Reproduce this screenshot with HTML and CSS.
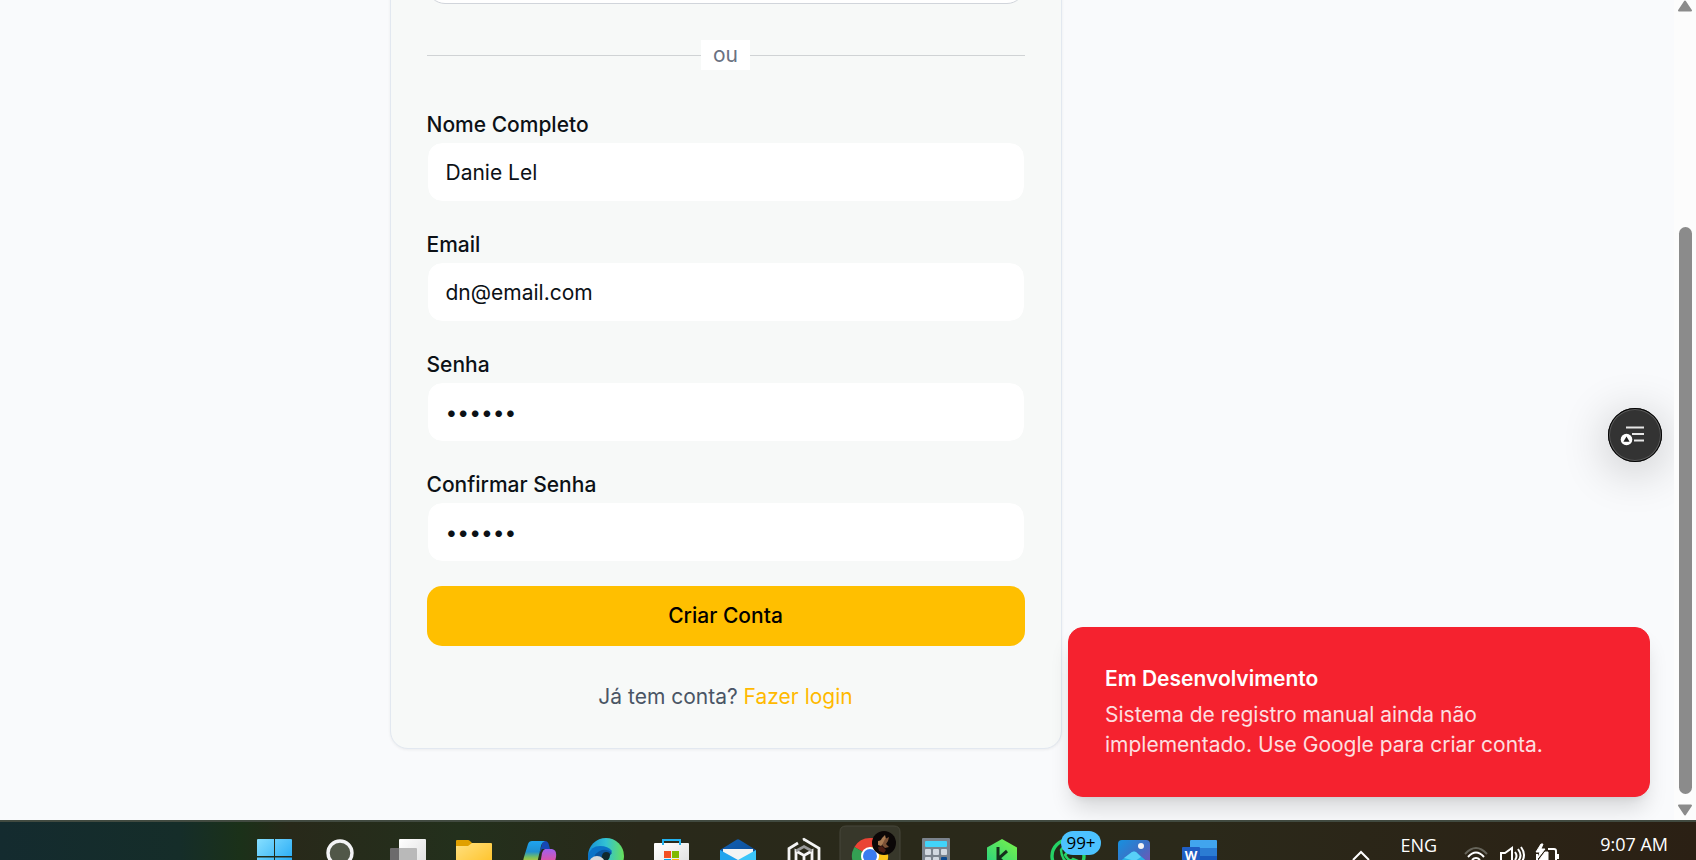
FILE: index.html
```html
<!DOCTYPE html>
<html lang="pt-BR">
<head>
<meta charset="utf-8">
<meta name="viewport" content="width=device-width, initial-scale=1">
<title>Criar Conta</title>
<link rel="stylesheet" href="styles.css">
</head>
<body>
<div class="browser">
  <main class="page">
    <section class="card">
      <button type="button" class="google-button" aria-label="Google"></button>
      <div class="divider"><span class="divider-text">ou</span></div>
      <form class="form">
        <div class="field">
          <label for="name">Nome Completo</label>
          <input id="name" type="text" value="Danie Lel">
        </div>
        <div class="field">
          <label for="email">Email</label>
          <input id="email" type="email" value="dn@email.com">
        </div>
        <div class="field">
          <label for="password">Senha</label>
          <input id="password" type="password" value="123456">
        </div>
        <div class="field">
          <label for="confirm">Confirmar Senha</label>
          <input id="confirm" type="password" value="123456">
        </div>
        <button type="submit" class="submit">Criar Conta</button>
      </form>
      <p class="login">Já tem conta? <a href="#login">Fazer login</a></p>
    </section>
    <button type="button" class="floating" aria-label="Menu">
      <svg viewBox="0 0 54 54" width="54" height="54">
        <path d="M18 19.500h18M24 26h12M26 32.500h10" stroke="#e6e6e6" stroke-width="2" fill="none"/>
        <circle cx="18.500" cy="31.500" r="7" fill="#333"/>
        <circle cx="18.500" cy="31.500" r="5.800" fill="#fff"/>
        <path d="M18.500 28.600l3.100 5.200h-6.200z" fill="#222"/>
      </svg>
    </button>
    <div class="toast" role="alert">
      <strong class="toast-title">Em Desenvolvimento</strong>
      <p class="toast-text">Sistema de registro manual ainda não implementado. Use Google para criar conta.</p>
    </div>
  </main>
  <div class="scrollbar">
    <svg width="16" height="12" viewBox="0 0 16 12"><path d="M8 1.500L14 10.500H2z" fill="#8b8b8b" stroke="#8b8b8b" stroke-width="2" stroke-linejoin="round"/></svg>
    <div class="track"><div class="thumb"></div></div>
    <svg width="16" height="12" viewBox="0 0 16 12"><path d="M8 10.500L14 1.500H2z" fill="#8b8b8b" stroke="#8b8b8b" stroke-width="2" stroke-linejoin="round"/></svg>
  </div>
</div>
<footer class="taskbar">
  <svg width="0" height="0" class="defs">
    <defs>
      <linearGradient id="win" x1="0" y1="0" x2="1" y2="1"><stop offset="0" stop-color="#86dfff"/><stop offset="1" stop-color="#12a0f4"/></linearGradient>
      <linearGradient id="paper" x1="0" y1="0" x2="1" y2="1"><stop offset="0" stop-color="#fff"/><stop offset="1" stop-color="#ddd"/></linearGradient>
      <linearGradient id="folder" x1="0" y1="0" x2="1" y2="1"><stop offset="0" stop-color="#ffe080"/><stop offset="1" stop-color="#ffc020"/></linearGradient>
      <linearGradient id="copA" x1="0" y1="0" x2="0" y2="1"><stop offset="0" stop-color="#1ea4f0"/><stop offset=".4" stop-color="#2090d0"/><stop offset=".6" stop-color="#78c060"/><stop offset=".9" stop-color="#f0d020"/></linearGradient>
      <linearGradient id="copB" x1="0" y1="0" x2="0" y2="1"><stop offset="0" stop-color="#a060f0"/><stop offset=".7" stop-color="#f05090"/><stop offset="1" stop-color="#ff9060"/></linearGradient>
      <linearGradient id="edge" x1="0" y1="0" x2="1" y2="0"><stop offset="0" stop-color="#1690d8"/><stop offset=".5" stop-color="#32c2d4"/><stop offset="1" stop-color="#68e05a"/></linearGradient>
      <linearGradient id="photo" x1="0" y1="0" x2="1" y2="1"><stop offset="0" stop-color="#1691e0"/><stop offset=".5" stop-color="#3e6fc4"/><stop offset="1" stop-color="#8a4bb0"/></linearGradient>
      <linearGradient id="hex" x1="0" y1="1" x2="1" y2="0"><stop offset="0" stop-color="#28d080"/><stop offset="1" stop-color="#7cf448"/></linearGradient>
      <linearGradient id="flap" x1="0" y1="0" x2="1" y2="1"><stop offset="0" stop-color="#1160b4"/><stop offset="1" stop-color="#0b4a92"/></linearGradient>
    </defs>
  </svg>
  <nav class="apps">
    <button type="button" class="app" aria-label="Iniciar"><svg viewBox="0 0 66 40"><path d="M17 19h16v17H16V20q0-1 1-1zM34 19h16q1 0 1 1v16H34zM16 37.500h17V54H16zM34 37.500h17V54H34z" fill="url(#win)"/></svg></button>
    <button type="button" class="app" aria-label="Pesquisar"><svg viewBox="0 0 66 40"><circle cx="33" cy="33" r="12" fill="#515748" stroke="#f4f4f6" stroke-width="3.400"/></svg></button>
    <button type="button" class="app" aria-label="Visão de tarefas"><svg viewBox="0 0 66 40"><rect x="17" y="28" width="27" height="27" rx="1" fill="#6c6a6c"/><rect x="26" y="19" width="27" height="30" rx="1" fill="url(#paper)"/><path d="M26 28h17q1 0 1 1v14H26z" fill="#b9b9b9"/></svg></button>
    <button type="button" class="app" aria-label="Arquivos"><svg viewBox="0 0 66 40"><path d="M17 21q0-1 1-1h11q1 0 2 1l3 3v6H17z" fill="#e0a000"/><path d="M17 26h12l4-3h19q1 0 1 1v24H17z" fill="url(#folder)"/></svg></button>
    <button type="button" class="app" aria-label="Copilot"><svg viewBox="0 0 66 40"><path d="M38 21h2q3 0 4 4l1 4h-8l-3 5z" fill="#1648b4"/><path d="M27 21h13q-3 1-4 5l-5 22H19q-2-4 0-11l4-13q1-3 4-3z" fill="url(#copA)"/><path d="M40 29h7q5 1 4 8l-3 14H34l3-18q1-3 3-4z" fill="url(#copB)"/></svg></button>
    <button type="button" class="app" aria-label="Edge"><svg viewBox="0 0 66 40"><circle cx="35" cy="36" r="18" fill="url(#edge)"/><path d="M17 35q3-9 12-9 8 0 12 5l-5 9H17z" fill="#0b73c8"/><path d="M22 40q2-8 9-10 6-1 10 3l-6 7z" fill="#0b559e"/><path d="M31 40q-1-8 4-8 4 0 4 3 0 3-2 5z" fill="#10282c"/><circle cx="26" cy="44" r="8" fill="#d9d9d9"/></svg></button>
    <button type="button" class="app" aria-label="Loja"><svg viewBox="0 0 66 40"><path d="M17 24q0-1 1-1h33q1 0 1 1v24H17z" fill="url(#paper)"/><path d="M26 25v-5h17v5" fill="none" stroke="#22b2f0" stroke-width="2"/><path d="M27 31h7v7h-7z" fill="#f25022"/><path d="M35 31h7v7h-7z" fill="#7fba00"/><path d="M27 39h7v7h-7z" fill="#00a4ef"/><path d="M35 39h7v7h-7z" fill="#ffb900"/></svg></button>
    <button type="button" class="app" aria-label="Email"><svg viewBox="0 0 66 40"><path d="M17 30L34 19.500q1-.6 2 0L53 30v12H17z" fill="url(#flap)"/><path d="M20 29h30v8L35 46 20 37z" fill="#f4f4f4"/><path d="M17 30l18 10-8 12H17z" fill="#22a4ee"/><path d="M53 30L35 40l8 12h10z" fill="#3cc6fa"/></svg></button>
    <button type="button" class="app" aria-label="Nx"><svg viewBox="0 0 66 40"><g fill="none" stroke="#f4f4f4" stroke-width="2.800"><path d="M20 42V28.500l9-5.500M34 20l1-.6 15 8.800V42M35 34v10M27 42V31l8 4.500 8-4.500v11"/><path d="M27 31l8-4.500 8 4.500" stroke="#999"/></g></svg></button>
    <button type="button" class="app" aria-label="Chrome"><svg viewBox="0 0 66 40"><path d="M5 60V12q0-6 6-6h48q6 0 6 6v48z" fill="#37372a" stroke="#47473a"/><path d="M35 36L19.400 27A18 18 0 0 1 50.600 27z" fill="#ea4335"/><path d="M35 36L19.400 27A18 18 0 0 0 35 54z" fill="#34a053"/><path d="M35 27h15.600A18 18 0 0 1 35 54z" fill="#fbc418"/><path d="M35 18a18 18 0 0 1 15.600 9H35z" fill="#ea4335"/><circle cx="35" cy="36" r="9" fill="#fff"/><circle cx="35" cy="36" r="7" fill="#3a7cf0"/><circle cx="49" cy="23" r="12" fill="#0b0707"/><path d="M43 21q3 0 4-3l3-3 1 4-2 4-3 3-3-1z" fill="#a87a52"/><path d="M50 19l4-2-1 4-2 3 3 3-4 1-3-3z" fill="#7c5236"/><path d="M43 27l4-1 4 4-2 3-5-2z" fill="#4c1d14"/></svg></button>
    <button type="button" class="app" aria-label="Calculadora"><svg viewBox="0 0 66 40"><rect x="21" y="18" width="28" height="34" rx="1" fill="#7b838d"/><rect x="24" y="21" width="22" height="6" rx="1" fill="#42d4fa"/><g fill="#d2d8e0"><rect x="24" y="29" width="6" height="6" rx="1"/><rect x="32" y="29" width="6" height="6" rx="1"/><rect x="40" y="29" width="6" height="6" rx="1"/><rect x="24" y="37" width="6" height="6" rx="1"/><rect x="32" y="37" width="6" height="6" rx="1"/></g><rect x="40" y="37" width="6" height="6" rx="1" fill="#0c4a90"/></svg></button>
    <button type="button" class="app" aria-label="Kite"><svg viewBox="0 0 66 40"><path d="M35 19l15 8.500V45H20V27.500z" fill="url(#hex)"/><path d="M31 27v15M40 31l-8 7 6 6" fill="none" stroke="#14301c" stroke-width="3"/></svg></button>
    <button type="button" class="app" aria-label="WhatsApp"><svg viewBox="0 0 66 40"><circle cx="35" cy="36" r="16" fill="#242918" stroke="#25d366" stroke-width="3.400"/><path d="M28 30q2-4 4-1l2 4-2 2q2 4 6 6l2-2 5 2-2 5q-14-2-15-16z" fill="none" stroke="#25d366" stroke-width="2.500"/></svg><span class="badge">99+</span></button>
    <button type="button" class="app" aria-label="Fotos"><svg viewBox="0 0 66 40"><rect x="19" y="20" width="32" height="32" rx="4" fill="url(#photo)"/><path d="M19 43l14-11q2-1 4 0l14 12v8H19z" fill="#27b2e6"/><path d="M25 38l8-6q2-1 4 0l5 5-6 4z" fill="#58d0f8"/><circle cx="42" cy="26" r="3" fill="#f4f4f4"/></svg></button>
    <button type="button" class="app" aria-label="Word"><svg viewBox="0 0 66 40"><path d="M26 20h25q1 0 1 1v7H25v-7q0-1 1-1z" fill="#41a5ee"/><path d="M25 28h27v8H25z" fill="#2b7cd3"/><path d="M25 36h27v8H25z" fill="#185abd"/><rect x="17" y="27" width="18" height="18" rx="1" fill="#1f5ec4"/><text x="26" y="40" class="word-letter">W</text></svg></button>
  </nav>
  <div class="tray">
    <button type="button" class="tray-button" aria-label="Ícones ocultos"><svg width="18" height="40" viewBox="0 0 18 40"><path d="M1 40l8-8 8 8" fill="none" stroke="#fff" stroke-width="2"/></svg></button>
    <span class="language">ENG</span>
    <svg width="96" height="40" viewBox="0 0 96 40" fill="none" stroke="#fff" stroke-width="2">
      <path d="M1 34q11-12 22 0" stroke="#66645a"/><path d="M4 37q8-9 16 0M8 40q4-4 8 0"/>
      <path d="M37 33h4l7-5v17l-7-4h-4zM51 32q3 4 0 8M54 29q5 7 0 12M57 27q6 8 0 16"/>
      <path d="M84 29h6q2 0 2 2v12H73V34M94 34v5"/><path d="M77 24l-5 8h4l-2 6 7-9h-4l2-5zM75 40l6-8h3v8z" fill="#fff" stroke-width="1"/>
    </svg>
    <time class="clock">9:07 AM</time>
  </div>
</footer>
</body>
</html>
```

FILE: styles.css
```css
* {
  box-sizing: border-box;
}

body {
  margin: 0;
  height: 100vh;
  display: flex;
  flex-direction: column;
  overflow: hidden;
  font-family: Inter, sans-serif;
  font-size: 21px;
  line-height: 30px;
  color: #0c1116;
}

button,
input {
  font: inherit;
  color: inherit;
}

p {
  margin: 0;
}

.browser {
  flex: 1;
  min-height: 0;
  display: flex;
}

.page {
  position: relative;
  flex: 1;
  display: flex;
  flex-direction: column;
  justify-content: flex-end;
  align-items: center;
  padding: 0 223px 71px 0;
  overflow: hidden;
  background: #f9fafc;
}

.card {
  width: 100%;
  max-width: 672px;
  display: flex;
  flex-direction: column;
  gap: 36px;
  padding: 36px;
  background: #f7f9f8;
  border: 1px solid #e2e8f0;
  border-radius: 18px;
  box-shadow: 0 1px 3px rgba(0, 0, 0, 0.06);
}

.google-button {
  height: 60px;
  background: #fff;
  border: 1px solid #d1d5db;
  border-radius: 18px;
}

.divider {
  display: flex;
  align-items: center;
}

.divider::before,
.divider::after {
  content: "";
  flex: 1;
  height: 1px;
  background: #d0d3d5;
}

.divider-text {
  padding: 0 12px;
  background: #fff;
  color: #6a7282;
}

.form {
  display: flex;
  flex-direction: column;
  gap: 24px;
}

.field {
  display: flex;
  flex-direction: column;
}

.field label {
  padding-top: 2px;
  font-weight: 500;
  line-height: 34px;
}

.field input {
  width: 100%;
  height: 60px;
  padding: 0 18px;
  background: #fff;
  background-clip: padding-box;
  border: 1px solid #f7f9f8;
  border-radius: 15px;
}

.submit {
  height: 60px;
  border: 0;
  border-radius: 15px;
  background: #ffbf00;
  color: #000;
  font-weight: 500;
}

.login {
  text-align: center;
  color: #4a5565;
}

.login a {
  color: #ffb900;
  text-decoration: none;
}

.floating {
  position: absolute;
  right: 12px;
  top: 408px;
  width: 54px;
  height: 54px;
  padding: 0;
  border: 0;
  border-radius: 50%;
  background: #333;
  box-shadow: inset 0 0 0 1px #000, inset 0 0 0 2px #5a5a5a, 0 8px 48px rgba(0, 0, 0, 0.24);
}

.floating svg {
  display: block;
}

.toast {
  position: absolute;
  right: 24px;
  bottom: 23px;
  width: 582px;
  display: flex;
  flex-direction: column;
  gap: 6px;
  padding: 36px;
  border: 1px solid #f5222f;
  border-radius: 15px;
  background: #f5222f;
  color: #fff;
  box-shadow: 0 15px 22px -4px rgba(0, 0, 0, 0.14), 0 6px 9px -6px rgba(0, 0, 0, 0.1);
}

.toast-title {
  font-weight: 600;
}

.toast-text {
  max-width: 480px;
  opacity: 0.85;
}

.scrollbar {
  width: 22px;
  display: flex;
  flex-direction: column;
  align-items: center;
  padding: 0 0 4px;
  background: #fcfcfc;
}

.track {
  flex: 1;
  display: flex;
  align-items: flex-end;
  padding-bottom: 10px;
}

.thumb {
  width: 13px;
  height: 72.5%;
  border-radius: 7px;
  background: #8b8b8b;
}

.taskbar {
  height: 40px;
  display: flex;
  justify-content: space-between;
  overflow: hidden;
  padding: 0 28px 0 241px;
  background: linear-gradient(90deg, #142b2f 0, #152d29 180px, #1b3119 240px, #28291a 290px, #23301c 460px, #29291a 640px, #2b291a 1200px, #2b2014 1696px);
  box-shadow: inset 0 2px #414a40;
  color: #fff;
  font-family: "Open Sans", "Noto Sans", sans-serif;
  font-size: 18px;
  line-height: 24px;
}

.defs {
  position: absolute;
}

.apps {
  display: flex;
}

.app {
  position: relative;
  width: 66px;
  height: 40px;
  padding: 0;
  border: 0;
  background: none;
}

.app svg {
  display: block;
  width: 66px;
  height: 40px;
}

.badge {
  position: absolute;
  left: 28px;
  top: 11px;
  width: 40px;
  z-index: 1;
  border-radius: 12px;
  background: #4cc2ff;
  color: #000;
  font-size: 17px;
  text-align: center;
}

.word-letter {
  font: bold 13px "Open Sans", sans-serif;
  fill: #fff;
  text-anchor: middle;
}

.tray {
  display: flex;
  align-items: flex-start;
}

.tray-button {
  padding: 0;
  border: 0;
  background: none;
}

.tray-button svg {
  display: block;
}

.language {
  margin: 13px 27px 0 30px;
}

.clock {
  margin: 12px 0 0 40px;
}
```
